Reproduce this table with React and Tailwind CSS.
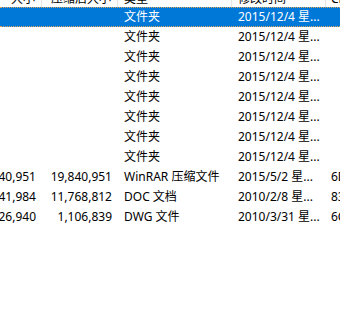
import React from "react";

const rows = [
  { size: "", packed: "", type: "文件夹", date: "2015/12/4 星...", crc: "", selected: true },
  { size: "", packed: "", type: "文件夹", date: "2015/12/4 星...", crc: "" },
  { size: "", packed: "", type: "文件夹", date: "2015/12/4 星...", crc: "" },
  { size: "", packed: "", type: "文件夹", date: "2015/12/4 星...", crc: "" },
  { size: "", packed: "", type: "文件夹", date: "2015/12/4 星...", crc: "" },
  { size: "", packed: "", type: "文件夹", date: "2015/12/4 星...", crc: "" },
  { size: "", packed: "", type: "文件夹", date: "2015/12/4 星...", crc: "" },
  { size: "", packed: "", type: "文件夹", date: "2015/12/4 星...", crc: "" },
  { size: "19,840,951", packed: "19,840,951", type: "WinRAR 压缩文件", date: "2015/5/2 星...", crc: "6D1A0F3B" },
  { size: "11,841,984", packed: "11,768,812", type: "DOC 文档", date: "2010/2/8 星...", crc: "83E2C7A1" },
  { size: "1,126,940", packed: "1,106,839", type: "DWG 文件", date: "2010/3/31 星...", crc: "6C4B92D0" },
];

export default function App() {
  return (
    <div
      className="w-[340px] h-[320px] overflow-hidden bg-white text-[12px] text-black"
      style={{ fontFamily: '"Segoe UI", "Noto Sans", "Noto Sans CJK SC", sans-serif' }}
    >
      {/* header (mostly scrolled out of view) */}
      <div className="flex h-[7px] overflow-hidden items-end text-[#000]">
        <div className="w-[42px] shrink-0 flex justify-end pr-[6px] border-r border-[#e5e5e5] h-full items-end">
          <span className="whitespace-nowrap leading-[18px] -mb-[1px]">大小</span>
        </div>
        <div className="w-[76px] shrink-0 flex justify-end pr-[6px] border-r border-[#e5e5e5] h-full items-end">
          <span className="whitespace-nowrap leading-[18px] -mb-[1px]">压缩后大小</span>
        </div>
        <div className="w-[114px] shrink-0 flex pl-[6px] border-r border-[#e5e5e5] h-full items-end">
          <span className="whitespace-nowrap leading-[18px] -mb-[1px]">类型</span>
        </div>
        <div className="w-[94px] shrink-0 flex pl-[6px] border-r border-[#e5e5e5] h-full items-end">
          <span className="whitespace-nowrap leading-[18px] -mb-[1px]">修改时间</span>
        </div>
        <div className="flex-1 flex pl-[5px] h-full items-end">
          <span className="whitespace-nowrap leading-[18px] -mb-[1px]">CRC32</span>
        </div>
      </div>
      {rows.map((r, i) => (
        <div
          key={i}
          className={
            r.selected
              ? "flex h-[20px] items-center bg-[#0078d7] text-white border-y border-dotted border-[#d9a25f]"
              : "flex h-[20px] items-center"
          }
        >
          <div className="w-[42px] shrink-0 flex justify-end pr-[6px] overflow-hidden">
            <span className="whitespace-nowrap">{r.size}</span>
          </div>
          <div className="w-[76px] shrink-0 flex justify-end pr-[6px] overflow-hidden">
            <span className="whitespace-nowrap">{r.packed}</span>
          </div>
          <div className="w-[114px] shrink-0 flex pl-[6px] overflow-hidden">
            <span className="whitespace-nowrap">{r.type}</span>
          </div>
          <div className="w-[94px] shrink-0 flex pl-[6px] overflow-hidden">
            <span className="whitespace-nowrap">{r.date}</span>
          </div>
          <div className="flex-1 flex pl-[5px] overflow-hidden">
            <span className="whitespace-nowrap">{r.crc}</span>
          </div>
        </div>
      ))}
    </div>
  );
}
